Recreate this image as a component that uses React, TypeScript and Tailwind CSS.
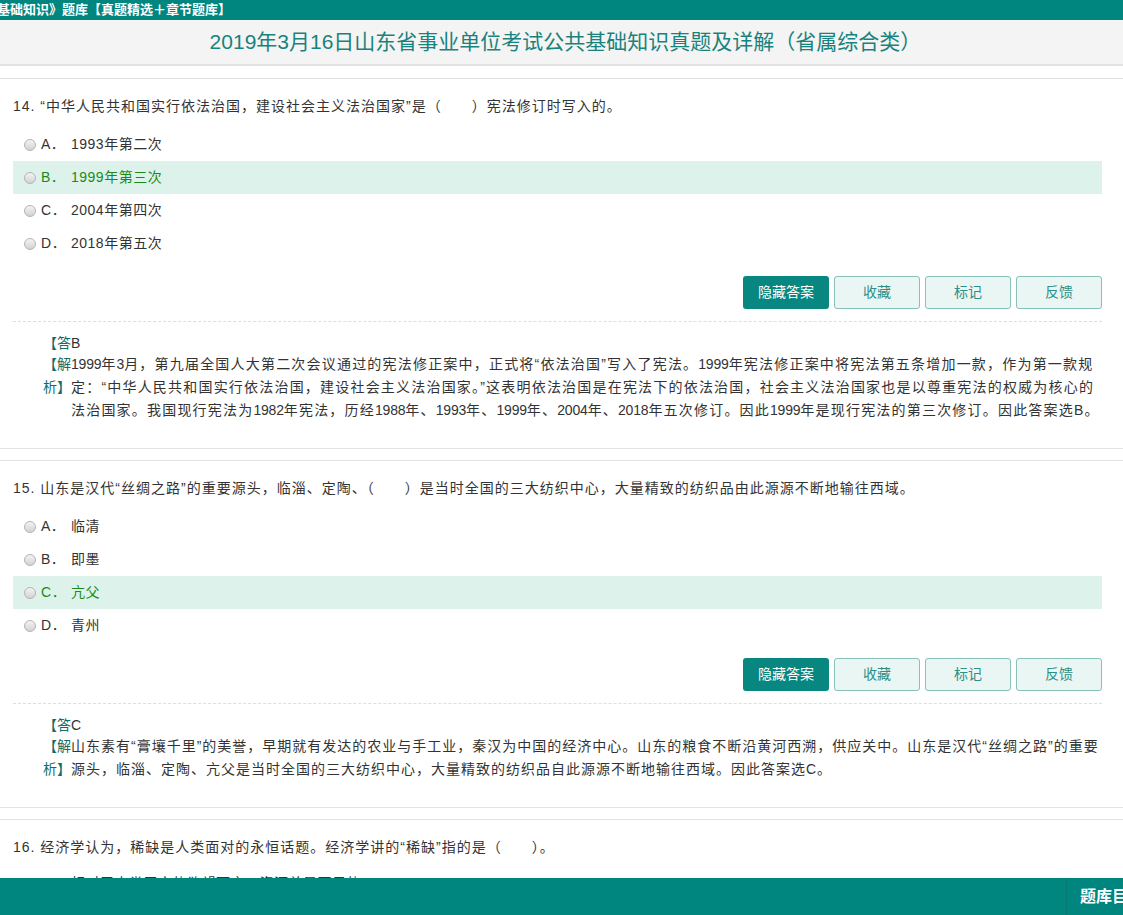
import React from "react";

const font = "font-['Liberation_Sans','Noto_Sans_CJK_SC',sans-serif]";

type Question = {
  no: number;
  text: string;
  options: { key: string; text: string }[];
  answer: string;
  explain: string;
  spacing: string;
};

const questions: Question[] = [
  {
    no: 14,
    text: "“中华人民共和国实行依法治国，建设社会主义法治国家”是（　　）宪法修订时写入的。",
    options: [
      { key: "A", text: "1993年第二次" },
      { key: "B", text: "1999年第三次" },
      { key: "C", text: "2004年第四次" },
      { key: "D", text: "2018年第五次" },
    ],
    answer: "B",
    explain:
      "1999年3月，第九届全国人大第二次会议通过的宪法修正案中，正式将“依法治国”写入了宪法。1999年宪法修正案中将宪法第五条增加一款，作为第一款规定：“中华人民共和国实行依法治国，建设社会主义法治国家。”这表明依法治国是在宪法下的依法治国，社会主义法治国家也是以尊重宪法的权威为核心的法治国家。我国现行宪法为1982年宪法，历经1988年、1993年、1999年、2004年、2018年五次修订。因此1999年是现行宪法的第三次修订。因此答案选B。",
    spacing: "tracking-[1.2px]",
  },
  {
    no: 15,
    text: "山东是汉代“丝绸之路”的重要源头，临淄、定陶、（　　）是当时全国的三大纺织中心，大量精致的纺织品由此源源不断地输往西域。",
    options: [
      { key: "A", text: "临清" },
      { key: "B", text: "即墨" },
      { key: "C", text: "亢父" },
      { key: "D", text: "青州" },
    ],
    answer: "C",
    explain:
      "山东素有“膏壤千里”的美誉，早期就有发达的农业与手工业，秦汉为中国的经济中心。山东的粮食不断沿黄河西溯，供应关中。山东是汉代“丝绸之路”的重要源头，临淄、定陶、亢父是当时全国的三大纺织中心，大量精致的纺织品自此源源不断地输往西域。因此答案选C。",
    spacing: "tracking-[1px]",
  },
];

// digits in the source font run narrower than the CJK glyphs
function Explain({ text }: { text: string }) {
  return (
    <>
      {text.split(/(\d+)/).map((part, i) =>
        /^\d+$/.test(part) ? (
          <span key={i} className="tracking-[-0.2px]">
            {part}
          </span>
        ) : (
          <React.Fragment key={i}>{part}</React.Fragment>
        )
      )}
    </>
  );
}

function Radio() {
  return (
    <span className="inline-block w-[12px] h-[12px] rounded-full border border-[#b4b4b4] bg-gradient-to-b from-[#f4f4f4] to-[#d2d2d2] shrink-0" />
  );
}

function OptionRow({ k, text, correct }: { k: string; text: string; correct?: boolean }) {
  return (
    <div
      className={`flex items-center h-[33px] pl-[11px] text-[14px] tracking-[0.5px] ${
        correct ? "bg-[#dcf2ea] text-[#1b8a1b]" : "text-[#333]"
      }`}
    >
      <Radio />
      <span className="ml-[5px] w-[30px]">{k}．</span>
      <span>{text}</span>
    </div>
  );
}

function QuestionBlock({ q }: { q: Question }) {
  return (
    <div className="border-y border-[#e3e3e3] pt-[17px] pb-[26px] pl-[13px] pr-[21px] mb-[11px]">
      <div className="text-[14px] leading-[20px] tracking-[1px] text-[#333]">
        {q.no}. {q.text}
      </div>
      <div className="mt-[12px]">
        {q.options.map((o) => (
          <OptionRow key={o.key} k={o.key} text={o.text} correct={o.key === q.answer} />
        ))}
      </div>
      <div className="flex justify-end gap-[5px] mt-[16px]">
        <button className="w-[86px] h-[33px] rounded-[3px] bg-[#07877f] text-white text-[14px]">
          隐藏答案
        </button>
        {["收藏", "标记", "反馈"].map((b) => (
          <button
            key={b}
            className="w-[86px] h-[33px] rounded-[3px] border border-[#88bfb9] bg-[#eaf6f4] text-[#2c8f88] text-[14px]"
          >
            {b}
          </button>
        ))}
      </div>
      <div className="mt-[12px] border-t border-dashed border-[#dedede]" />
      <div className="pl-[30px] pt-[11px] text-[14px]">
        <div className="flex leading-[20px]">
          <span className="w-[28px] text-[#0f6d66]">【答</span>
          <span className="text-[#333]">{q.answer}</span>
        </div>
        <div className="flex leading-[23px]">
          <span className="w-[28px] shrink-0 text-[#0f6d66]">
            【解
            <br />
            析】
          </span>
          <span className={`text-[#333] ${q.spacing}`}>
            <Explain text={q.explain} />
          </span>
        </div>
      </div>
    </div>
  );
}

export default function App() {
  return (
    <div className={`${font} h-[915px] w-full flex flex-col overflow-hidden bg-white`}>
      <div className="h-[20px] bg-[#00857f] text-white font-bold text-[13px] leading-[20px] whitespace-nowrap overflow-hidden shrink-0">
        <span className="ml-[-3px]">基础知识》题库【真题精选＋章节题库】</span>
      </div>
      <div className="h-[46px] bg-[#f4f4f4] border-b-2 border-[#e2e2e2] flex items-center justify-center shrink-0">
        <h1 className="text-[21px] text-[#18837d] ml-[8px]">
          2019年3月16日山东省事业单位考试公共基础知识真题及详解（省属综合类）
        </h1>
      </div>
      <div className="flex-1 overflow-hidden pt-[12px]">
        {questions.map((q) => (
          <QuestionBlock key={q.no} q={q} />
        ))}
        <div className="border-t border-[#e3e3e3] pt-[17px] pl-[13px] pr-[21px]">
          <div className="text-[14px] leading-[20px] tracking-[1px] text-[#333]">
            16. 经济学认为，稀缺是人类面对的永恒话题。经济学讲的“稀缺”指的是（　　）。
          </div>
          <div className="mt-[10px]">
            <OptionRow k="A" text="相对于人类无穷的欲望而言，资源总是不足的" />
          </div>
        </div>
      </div>
      <div className="h-[37px] bg-[#00857f] flex justify-end shrink-0">
        <div className="border-l border-[#0a766f] pl-[13px] w-[57px] overflow-hidden whitespace-nowrap text-white font-bold text-[16px] leading-[37px]">
          题库目录
        </div>
      </div>
    </div>
  );
}
